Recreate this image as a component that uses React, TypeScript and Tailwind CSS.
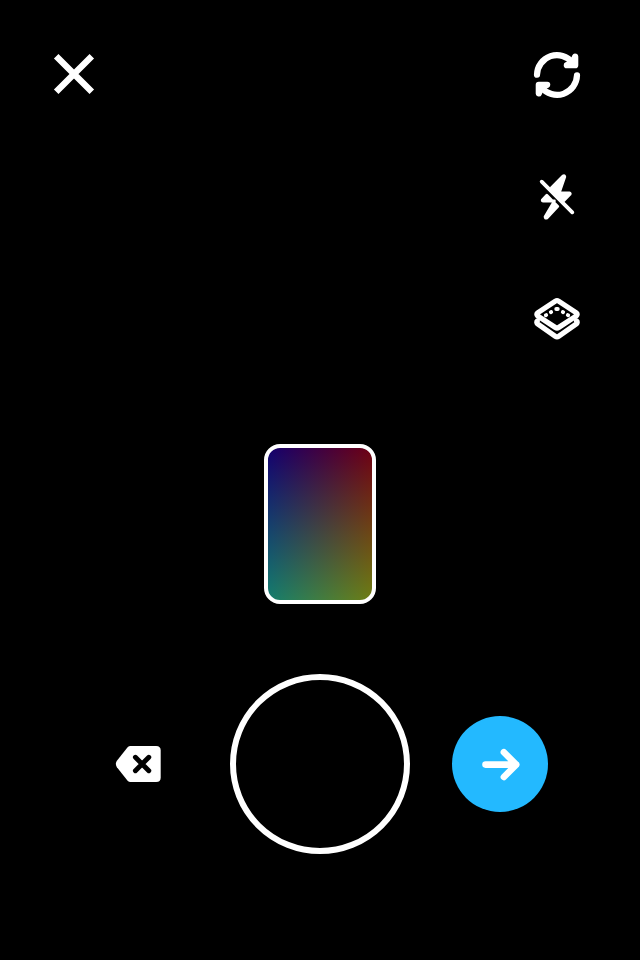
import React from "react";

const icon = "block h-[60px] w-[60px]";

function CloseIcon() {
  return (
    <svg className={icon} viewBox="0 0 60 60" fill="none" stroke="#fff" strokeWidth="6.4">
      <path d="M12.2 12.2 47.8 47.8M47.8 12.2 12.2 47.8" />
    </svg>
  );
}

function FlipIcon() {
  return (
    <svg className={icon} viewBox="0 0 60 60" fill="none" stroke="#fff" strokeWidth="6.2" strokeLinecap="round" strokeLinejoin="round">
      <path d="M10 29.7A20 20 0 0 1 45.6 17.6" />
      <path fill="#fff" d="M48.2 11.6V20.2H39.8L45.6 17.6Z" />
      <path d="M50 30.3A20 20 0 0 1 14.4 42.4" />
      <path fill="#fff" d="M11.8 48.4V39.8H20.2L14.4 42.4Z" />
    </svg>
  );
}

function FlashOffIcon() {
  return (
    <svg className={icon} viewBox="0 0 60 60" fill="#fff" stroke="#fff" strokeLinecap="round" strokeLinejoin="round">
      <path strokeWidth="2.8" d="M24.4 20.7 36 8.9Q37.7 8 37.8 9.9L32.2 26H42.4Q43.8 26.2 43 27.4L37.2 33.4Z" />
      <path strokeWidth="2.8" d="M19.8 28.3 15.3 33Q15 33.9 16.2 34H27.4L18.1 49.6Q18 51.8 19.9 51L30.8 39.4Z" />
      <path strokeWidth="3.8" d="M14.7 14.7 45.3 45.3" />
    </svg>
  );
}

function LayersIcon() {
  return (
    <svg className={icon} viewBox="0 0 60 60" fill="none" stroke="#fff" strokeLinecap="round" strokeLinejoin="round">
      <path strokeWidth="5.2" d="M28.4 12.1Q30 11.1 31.6 12.1L49.4 23.8Q51 25.3 49.4 26.8L31.6 38.5Q30 39.5 28.4 38.5L10.6 26.8Q9 25.3 10.6 23.8Z" />
      <path strokeWidth="5.2" d="M10.4 31.9Q9 33.2 10.6 34.8L28.4 47.3Q30 48.4 31.6 47.3L49.4 34.8Q51 33.2 49.6 31.9" />
      <path strokeWidth="3.8" d="M18.8 26.3 19.2 26.1M23.8 23.2 24.2 23M29.2 20H30.8M35.8 23 36.2 23.2M40.8 26.1 41.2 26.3" />
    </svg>
  );
}

function DeleteIcon() {
  return (
    <svg className={icon} viewBox="0 0 60 60" fill="none" strokeLinecap="round" strokeLinejoin="round">
      <path fill="#fff" d="M22.5 12H48.2Q52.7 12 52.7 16.5V43.5Q52.7 48 48.2 48H22.5Q20.8 48 19.6 46.7L8.9 33.2Q6.8 30 8.9 26.8L19.6 13.3Q20.8 12 22.5 12Z" />
      <path stroke="#000" strokeWidth="4.9" d="M27.4 23.3 40.8 36.7M40.8 23.3 27.4 36.7" />
    </svg>
  );
}

function ArrowIcon() {
  return (
    <svg className={icon} viewBox="0 0 60 60" fill="none" stroke="#fff" strokeWidth="6.6" strokeLinecap="round" strokeLinejoin="round">
      <path d="M15.5 30.6H46.2M33.9 18.2 46.2 30.6 33.9 43" />
    </svg>
  );
}

export default function App() {
  return (
    <main className="flex h-[960px] w-[640px] flex-col overflow-hidden bg-black">
      <header className="flex items-start justify-between pt-11 pr-[53px] pl-11">
        <button aria-label="Close"><CloseIcon /></button>
        <div className="flex flex-col gap-[62px] pt-px">
          <button aria-label="Flip camera"><FlipIcon /></button>
          <button aria-label="Flash off"><FlashOffIcon /></button>
          <button aria-label="Layers"><LayersIcon /></button>
        </div>
      </header>
      <div className="mt-[95px] flex justify-center">
        <div className="h-40 w-28 rounded-2xl border-4 border-white bg-[linear-gradient(to_bottom,#000000,#007d00),linear-gradient(to_right,#14006e,#6e0014)] bg-origin-padding bg-blend-screen" />
      </div>
      <footer className="mt-[70px] flex items-center pl-[108px]">
        <button aria-label="Delete clip"><DeleteIcon /></button>
        <button aria-label="Record" className="ml-[62px] h-[180px] w-[180px] rounded-full border-6 border-white" />
        <button aria-label="Next" className="ml-[42px] flex h-24 w-24 items-center justify-center rounded-full bg-[#23b9ff]">
          <ArrowIcon />
        </button>
      </footer>
    </main>
  );
}
